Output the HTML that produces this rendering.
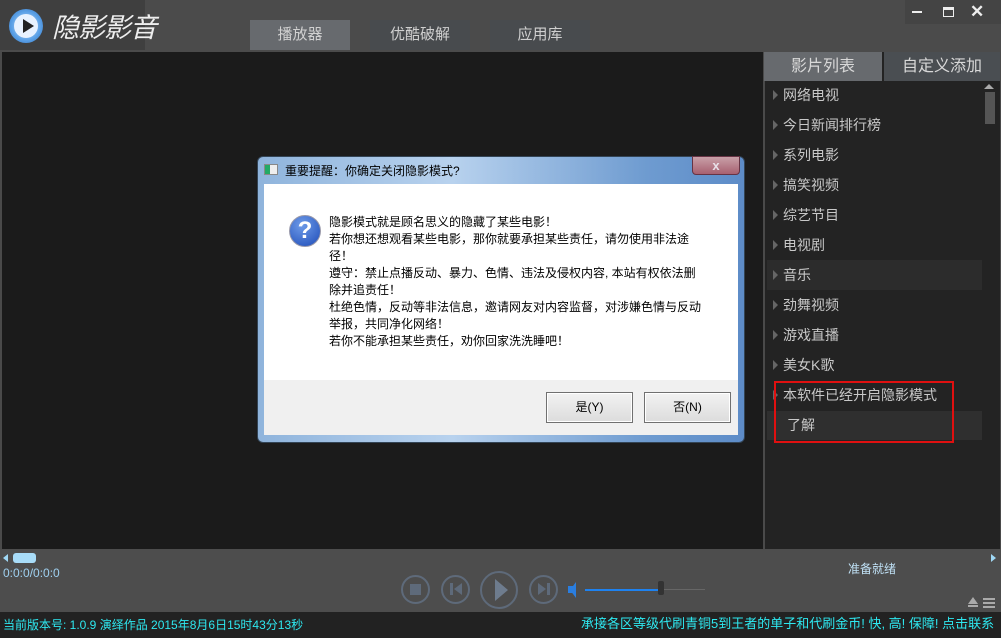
<!DOCTYPE html>
<html><head><meta charset="utf-8"><style>
*{margin:0;padding:0;box-sizing:border-box}
body{width:1001px;height:638px;overflow:hidden;background:#4a4a4a;font-family:"Liberation Sans","Noto Sans CJK SC",sans-serif;position:relative}
.a{position:absolute}
.tab{position:absolute;top:20px;height:30px;color:#d0d0d0;font-size:15px;text-align:center;line-height:30px}
.li{position:absolute;left:767px;width:215px;height:30px;color:#c8c8c8;font-size:14px;line-height:30px;padding-left:16px}
.li:before{content:"";position:absolute;left:6px;top:10px;border-left:5px solid #666;border-top:5px solid transparent;border-bottom:5px solid transparent}
.dl{font-size:12px;line-height:17px;color:#000}
.btn{position:absolute;top:392px;width:87px;height:31px;border:1px solid #707070;background:linear-gradient(#f2f2f2,#dcdcdc);font-size:12px;text-align:center;line-height:29px;box-shadow:inset 0 0 0 1px #fff}
.cb{position:absolute;border:2px solid #5e6a7a;border-radius:50%}
</style></head><body>
<div class="a" style="left:0;top:0;width:1001px;height:52px;background:#4b4b4b"></div>
<div class="a" style="left:0;top:0;width:145px;height:50px;background:#3f3f3f"></div>
<div class="a" style="left:9px;top:9px;width:34px;height:34px;border-radius:50%;background:radial-gradient(#cfe6ff,#5aa0e6 60%,#2e6fc0);"></div>
<div class="a" style="left:14px;top:14px;width:24px;height:24px;border-radius:50%;background:#e8f2ff"></div>
<div class="a" style="left:23px;top:19px;border-left:11px solid #222;border-top:7px solid transparent;border-bottom:7px solid transparent"></div>
<div class="a" style="left:52px;top:6px;font-size:27px;color:#eee;font-style:italic;letter-spacing:-1px">隐影影音</div>
<div class="tab" style="left:250px;width:100px;background:#676a6e">播放器</div>
<div class="tab" style="left:370px;width:100px;background:#484b4e">优酷破解</div>
<div class="tab" style="left:490px;width:100px;background:#484b4e">应用库</div>
<div class="a" style="left:905px;top:0;width:96px;height:24px;background:#444"></div>
<div class="a" style="left:912px;top:11px;width:10px;height:2px;background:#eee"></div>
<div class="a" style="left:943px;top:7px;width:11px;height:10px;border:1px solid #eee;border-top-width:3px"></div>
<div class="a" style="left:970px;top:2px;color:#eee;font-size:17px;font-weight:bold">✕</div>
<div class="a" style="left:2px;top:52px;width:761px;height:497px;background:#1b1b1b"></div>
<div class="a" style="left:765px;top:52px;width:235px;height:497px;background:#232323"></div>
<div class="a" style="left:764px;top:52px;width:118px;height:29px;background:#676a6e;color:#d8d8d8;font-size:16px;text-align:center;line-height:29px">影片列表</div>
<div class="a" style="left:884px;top:52px;width:116px;height:29px;background:#4a4e52;color:#d8d8d8;font-size:16px;text-align:center;line-height:29px">自定义添加</div>
<div class="a" style="left:984px;top:84px;border-bottom:5px solid #aaa;border-left:5px solid transparent;border-right:5px solid transparent"></div>
<div class="a" style="left:985px;top:92px;width:10px;height:32px;background:#555"></div>
<div class="li" style="top:80px">网络电视</div>
<div class="li" style="top:110px">今日新闻排行榜</div>
<div class="li" style="top:140px">系列电影</div>
<div class="li" style="top:170px">搞笑视频</div>
<div class="li" style="top:200px">综艺节目</div>
<div class="li" style="top:230px">电视剧</div>
<div class="li" style="top:260px;background:#2c2c2c">音乐</div>
<div class="li" style="top:290px">劲舞视频</div>
<div class="li" style="top:320px">游戏直播</div>
<div class="li" style="top:350px">美女K歌</div>
<div class="li" style="top:380px">本软件已经开启隐影模式</div>
<div class="a" style="left:767px;top:411px;width:215px;height:29px;background:#2f2f2f;color:#c8c8c8;font-size:14px;line-height:29px;padding-left:20px">了解</div>
<div class="a" style="left:774px;top:381px;width:180px;height:62px;border:2px solid #e01010"></div>
<div class="a" style="left:0;top:549px;width:1001px;height:63px;background:#4d4d4d"></div>
<div class="a" style="left:3px;top:554px;border-right:5px solid #9fd8f5;border-top:4px solid transparent;border-bottom:4px solid transparent"></div>
<div class="a" style="left:13px;top:553px;width:23px;height:10px;border-radius:3px;background:#a8dcf8"></div>
<div class="a" style="left:991px;top:554px;border-left:5px solid #9fd8f5;border-top:4px solid transparent;border-bottom:4px solid transparent"></div>
<div class="a" style="left:3px;top:566px;color:#9fd0f0;font-size:12px">0:0:0/0:0:0</div>
<div class="a" style="left:848px;top:560px;color:#bfe0f5;font-size:12px">准备就绪</div>
<div class="cb" style="left:401px;top:575px;width:29px;height:29px"></div>
<div class="a" style="left:410px;top:584px;width:11px;height:11px;background:#5e6a7a"></div>
<div class="cb" style="left:441px;top:575px;width:29px;height:29px"></div>
<div class="a" style="left:450px;top:583px;width:3px;height:12px;background:#5e6a7a"></div>
<div class="a" style="left:454px;top:583px;border-right:8px solid #5e6a7a;border-top:6px solid transparent;border-bottom:6px solid transparent"></div>
<div class="cb" style="left:480px;top:571px;width:38px;height:38px"></div>
<div class="a" style="left:495px;top:579px;border-left:13px solid #6e7c8e;border-top:11px solid transparent;border-bottom:11px solid transparent"></div>
<div class="cb" style="left:529px;top:575px;width:29px;height:29px"></div>
<div class="a" style="left:538px;top:583px;border-left:8px solid #5e6a7a;border-top:6px solid transparent;border-bottom:6px solid transparent"></div>
<div class="a" style="left:547px;top:583px;width:3px;height:12px;background:#5e6a7a"></div>
<div class="a" style="left:568px;top:586px;width:5px;height:7px;background:#2a7ee0"></div>
<div class="a" style="left:570px;top:582px;border-right:6px solid #2a7ee0;border-top:8px solid transparent;border-bottom:8px solid transparent"></div>
<div class="a" style="left:585px;top:589px;width:75px;height:2px;background:#1e82f0"></div>
<div class="a" style="left:660px;top:589px;width:45px;height:1px;background:#666"></div>
<div class="a" style="left:658px;top:581px;width:6px;height:14px;background:#333;border-radius:2px"></div>
<div class="a" style="left:968px;top:597px;border-bottom:7px solid #aaa;border-left:5px solid transparent;border-right:5px solid transparent"></div>
<div class="a" style="left:968px;top:605px;width:10px;height:2px;background:#aaa"></div>
<div class="a" style="left:983px;top:598px;width:12px;height:10px;background:repeating-linear-gradient(#aaa 0 2px,transparent 2px 4px)"></div>
<div class="a" style="left:0;top:612px;width:1001px;height:26px;background:#222"></div>
<div class="a" style="left:3px;top:616px;color:#2ee8f0;font-size:12px">当前版本号: 1.0.9 演绎作品 2015年8月6日15时43分13秒</div>
<div class="a" style="left:581px;top:613px;color:#2ee8f0;font-size:13px">承接各区等级代刷青铜5到王者的单子和代刷金币! 快, 高! 保障! 点击联系</div>
<!-- dialog -->
<div class="a" style="left:257px;top:156px;width:488px;height:287px;border-radius:6px;border:1px solid #345;background:linear-gradient(90deg,#8fb4dc,#b8d2ee 40%,#6e9bd0 80%,#5d8cc8)"></div>
<div class="a" style="left:264px;top:164px;width:14px;height:11px;background:linear-gradient(90deg,#2a6 40%,#eee 40%);border:1px solid #888"></div>
<div class="a" style="left:285px;top:162px;font-size:12px;color:#000">重要提醒：你确定关闭隐影模式?</div>
<div class="a" style="left:692px;top:156px;width:48px;height:19px;border-radius:0 0 4px 4px;background:linear-gradient(#c8a0a8,#a86070);border:1px solid #634;color:#e8e0e8;text-align:center;font-size:13px;line-height:17px;font-weight:bold">x</div>
<div class="a" style="left:264px;top:184px;width:474px;height:196px;background:#fff"></div>
<div class="a" style="left:264px;top:380px;width:474px;height:55px;background:#f0f0f0"></div>
<div class="a" style="left:289px;top:215px;width:32px;height:32px;border-radius:50%;border:1px solid #99a;background:radial-gradient(circle at 40% 30%,#6e9be8,#1e4cb8);color:#fff;font-weight:bold;font-size:24px;text-align:center;line-height:30px">?</div>
<div class="a dl" style="left:329px;top:214px;width:378px">隐影模式就是顾名思义的隐藏了某些电影！<br>若你想还想观看某些电影，那你就要承担某些责任，请勿使用非法途<br>径！<br>遵守：禁止点播反动、暴力、色情、违法及侵权内容, 本站有权依法删<br>除并追责任！<br>杜绝色情，反动等非法信息，邀请网友对内容监督，对涉嫌色情与反动<br>举报，共同净化网络！<br>若你不能承担某些责任，劝你回家洗洗睡吧！</div>
<div class="btn" style="left:546px">是(Y)</div>
<div class="btn" style="left:644px">否(N)</div>
</body></html>
